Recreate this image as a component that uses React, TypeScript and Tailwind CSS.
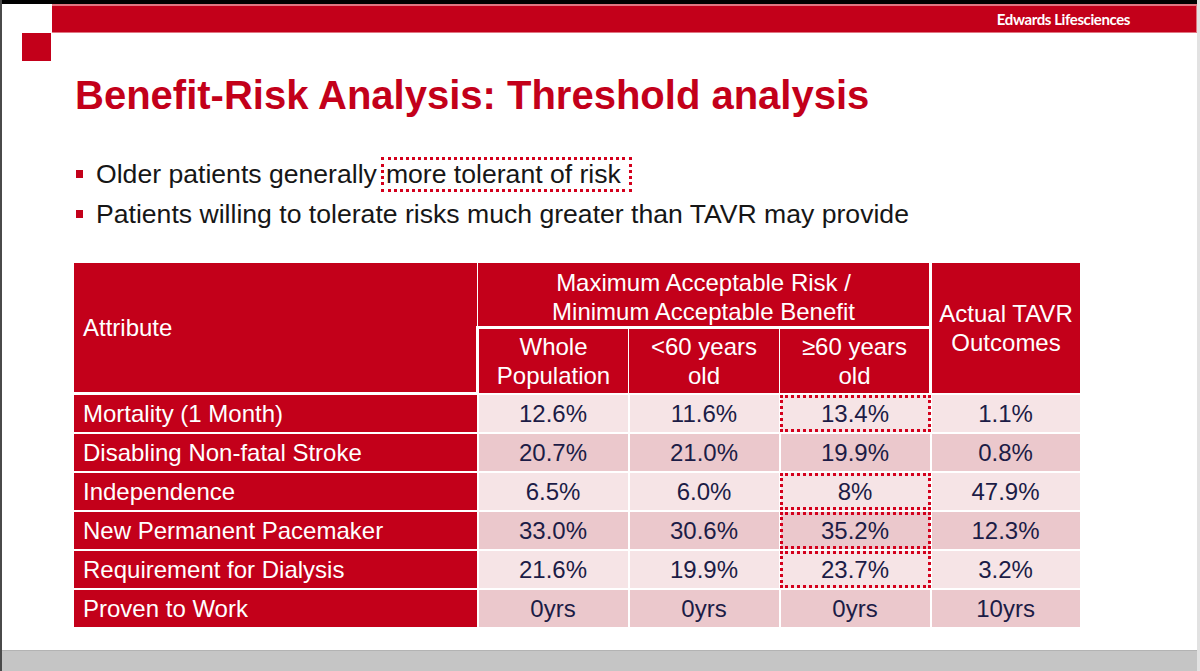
import React from "react"

const RED = "bg-[#c3001a]"

type Row = {
  label: string
  values: string[]
  boxed: boolean
}

const rows: Row[] = [
  { label: "Mortality (1 Month)", values: ["12.6%", "11.6%", "13.4%", "1.1%"], boxed: true },
  { label: "Disabling Non-fatal Stroke", values: ["20.7%", "21.0%", "19.9%", "0.8%"], boxed: false },
  { label: "Independence", values: ["6.5%", "6.0%", "8%", "47.9%"], boxed: true },
  { label: "New Permanent Pacemaker", values: ["33.0%", "30.6%", "35.2%", "12.3%"], boxed: true },
  { label: "Requirement for Dialysis", values: ["21.6%", "19.9%", "23.7%", "3.2%"], boxed: true },
  { label: "Proven to Work", values: ["0yrs", "0yrs", "0yrs", "10yrs"], boxed: false },
]

function Bullet({ children }: { children: React.ReactNode }) {
  return (
    <li className="flex items-center h-[40px] leading-[40px]">
      <span className={`w-[7px] h-[8px] ${RED} shrink-0`} />
      <span className="ml-[13px] whitespace-nowrap">{children}</span>
    </li>
  )
}

function ThresholdTable() {
  return (
    <table
      className="table-fixed border-collapse text-[24px] leading-[29px]"
      style={{ width: 1007 }}
    >
      <colgroup>
        <col className="w-[404px]" />
        <col className="w-[151px]" />
        <col className="w-[151px]" />
        <col className="w-[151px]" />
        <col className="w-[150px]" />
      </colgroup>
      <thead className="text-white">
        <tr className="h-[65px]">
          <th
            rowSpan={2}
            className={`${RED} border border-white border-b-[3px] text-left font-normal pl-[9px] align-middle`}
          >
            Attribute
          </th>
          <th colSpan={3} className={`${RED} border border-white font-normal align-top pt-[5px]`}>
            Maximum Acceptable Risk /<br />
            Minimum Acceptable Benefit
          </th>
          <th rowSpan={2} className={`${RED} border border-white border-l-[3px] font-normal align-middle`}>
            Actual TAVR
            <br />
            Outcomes
          </th>
        </tr>
        <tr className="h-[66px]">
          <th className={`${RED} border border-white border-t-[3px] border-l-[3px] font-normal`}>
            Whole
            <br />
            Population
          </th>
          <th className={`${RED} border border-white border-t-[3px] font-normal`}>
            &lt;60 years
            <br />
            old
          </th>
          <th className={`${RED} border border-white border-t-[3px] border-r-[3px] font-normal`}>
            ≥60 years
            <br />
            old
          </th>
        </tr>
      </thead>
      <tbody>
        {rows.map((row, i) => {
          const tint = i % 2 === 0 ? "bg-[#f6e4e6]" : "bg-[#ebc8cc]"
          return (
            <tr key={row.label} className="h-[39px]">
              <td className={`${RED} border-x border-white border-y-2 text-white pl-[9px] whitespace-nowrap`}>
                {row.label}
              </td>
              {row.values.map((v, j) => (
                <td
                  key={j}
                  className={`${tint} border-x-2 border-y-2 border-white text-center text-[#1c1c46] relative`}
                >
                  {v}
                  {j === 2 && row.boxed && (
                    <span className="absolute inset-y-0 -inset-x-[1px] border-[3px] border-dotted border-[#d4001c] pointer-events-none" />
                  )}
                </td>
              ))}
            </tr>
          )
        })}
      </tbody>
    </table>
  )
}

export default function App() {
  return (
    <div
      className="w-[1200px] h-[671px] overflow-hidden bg-white flex flex-col border-l-2 border-l-[#4a4a4a] border-r-[3px] border-r-[#e2e2e2]"
      style={{ fontFamily: '"Liberation Sans", Arial, sans-serif' }}
    >
      <div className="h-[4px] bg-black shrink-0" />
      <div className="flex h-[29px] shrink-0">
        <div className="w-[50px]" />
        <div
          className={`flex-1 ${RED} border-t-2 border-b border-r border-[#e07682] flex items-center justify-end pr-[66px]`}
        >
          <span
            className="text-white text-[15px] font-bold tracking-[-0.4px]"
            style={{ fontFamily: '"Liberation Sans Narrow", Lato, sans-serif' }}
          >
            Edwards Lifesciences
          </span>
        </div>
      </div>
      <div className={`ml-[20px] w-[29px] h-[28px] ${RED} shrink-0`} />

      <h1 className="ml-[73px] mt-[14px] text-[40px] leading-[40px] font-bold text-[#c3001a] whitespace-nowrap">
        Benefit-Risk Analysis: Threshold analysis
      </h1>

      <ul className="ml-[74px] mt-[39px] text-[26.6px] text-[#161616]">
        <Bullet>
          Older patients generally
          <span className="inline-block ml-[4px] pl-[2px] pr-[8px] border-[3px] border-dotted border-[#d4001c] leading-[29px]">
            more tolerant of risk
          </span>
        </Bullet>
        <Bullet>Patients willing to tolerate risks much greater than TAVR may provide</Bullet>
      </ul>

      <div className="ml-[71px] mt-[28px]">
        <ThresholdTable />
      </div>

      <div className="mt-auto h-[21px] bg-[#c5c5c5] border-t border-[#b3b3b3] shrink-0" />
    </div>
  )
}
